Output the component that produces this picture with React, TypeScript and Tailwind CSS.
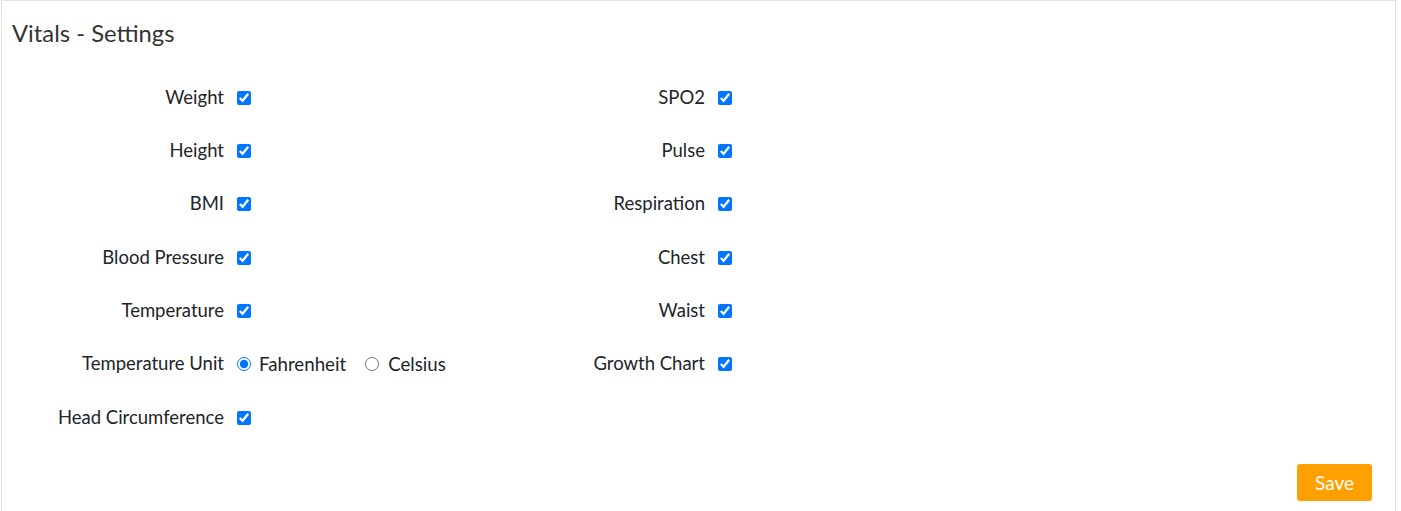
import React, { useState } from 'react';

const leftItems = ['Weight', 'Height', 'BMI', 'Blood Pressure', 'Temperature', 'Temperature Unit', 'Head Circumference'];
const rightItems = ['SPO2', 'Pulse', 'Respiration', 'Chest', 'Waist', 'Growth Chart'];

const App: React.FC = () => {
  const [checked, setChecked] = useState<Record<string, boolean>>(
    Object.fromEntries([...leftItems, ...rightItems].map((k) => [k, true]))
  );
  const [unit, setUnit] = useState<'F' | 'C'>('F');

  const toggle = (key: string) => setChecked((prev) => ({ ...prev, [key]: !prev[key] }));

  const renderRow = (label: string) => (
    <div key={label} className="flex items-center h-[53.33px]">
      <label className="w-[222px] text-right text-[18.5px] text-[#212529]">{label}</label>
      <div className="ml-[13px] flex items-center">
        {label === 'Temperature Unit' ? (
          <>
            <input
              type="radio"
              name="unit"
              className="w-[14px] h-[14px] m-0"
              checked={unit === 'F'}
              onChange={() => setUnit('F')}
            />
            <span className="ml-[8px] text-[18.7px] text-[#212529]">Fahrenheit</span>
            <input
              type="radio"
              name="unit"
              className="w-[14px] h-[14px] m-0 ml-[19px]"
              checked={unit === 'C'}
              onChange={() => setUnit('C')}
            />
            <span className="ml-[9px] text-[18.7px] text-[#212529]">Celsius</span>
          </>
        ) : (
          <input
            type="checkbox"
            className="w-[14px] h-[14px] m-0"
            checked={checked[label]}
            onChange={() => toggle(label)}
          />
        )}
      </div>
    </div>
  );

  return (
    <div className="pl-px bg-white min-h-[511px]" style={{ fontFamily: 'Lato, "Open Sans", sans-serif' }}>
      <div className="w-[1395px] min-h-[520px] border border-[#e3e3e3] bg-white">
        <h2 className="pl-[10px] pt-[16px] h-[70px] text-[23.8px] leading-[32px] text-[#333333]">Vitals - Settings</h2>
        <div className="flex">
          <div className="w-[481px]">{leftItems.map(renderRow)}</div>
          <div>{rightItems.map(renderRow)}</div>
        </div>
        <div className="flex justify-end pr-[23px] pt-[20px]">
          <button className="w-[75px] h-[37px] rounded-[3px] bg-[#ffa000] text-white text-[19px]">Save</button>
        </div>
      </div>
    </div>
  );
};

export default App;
